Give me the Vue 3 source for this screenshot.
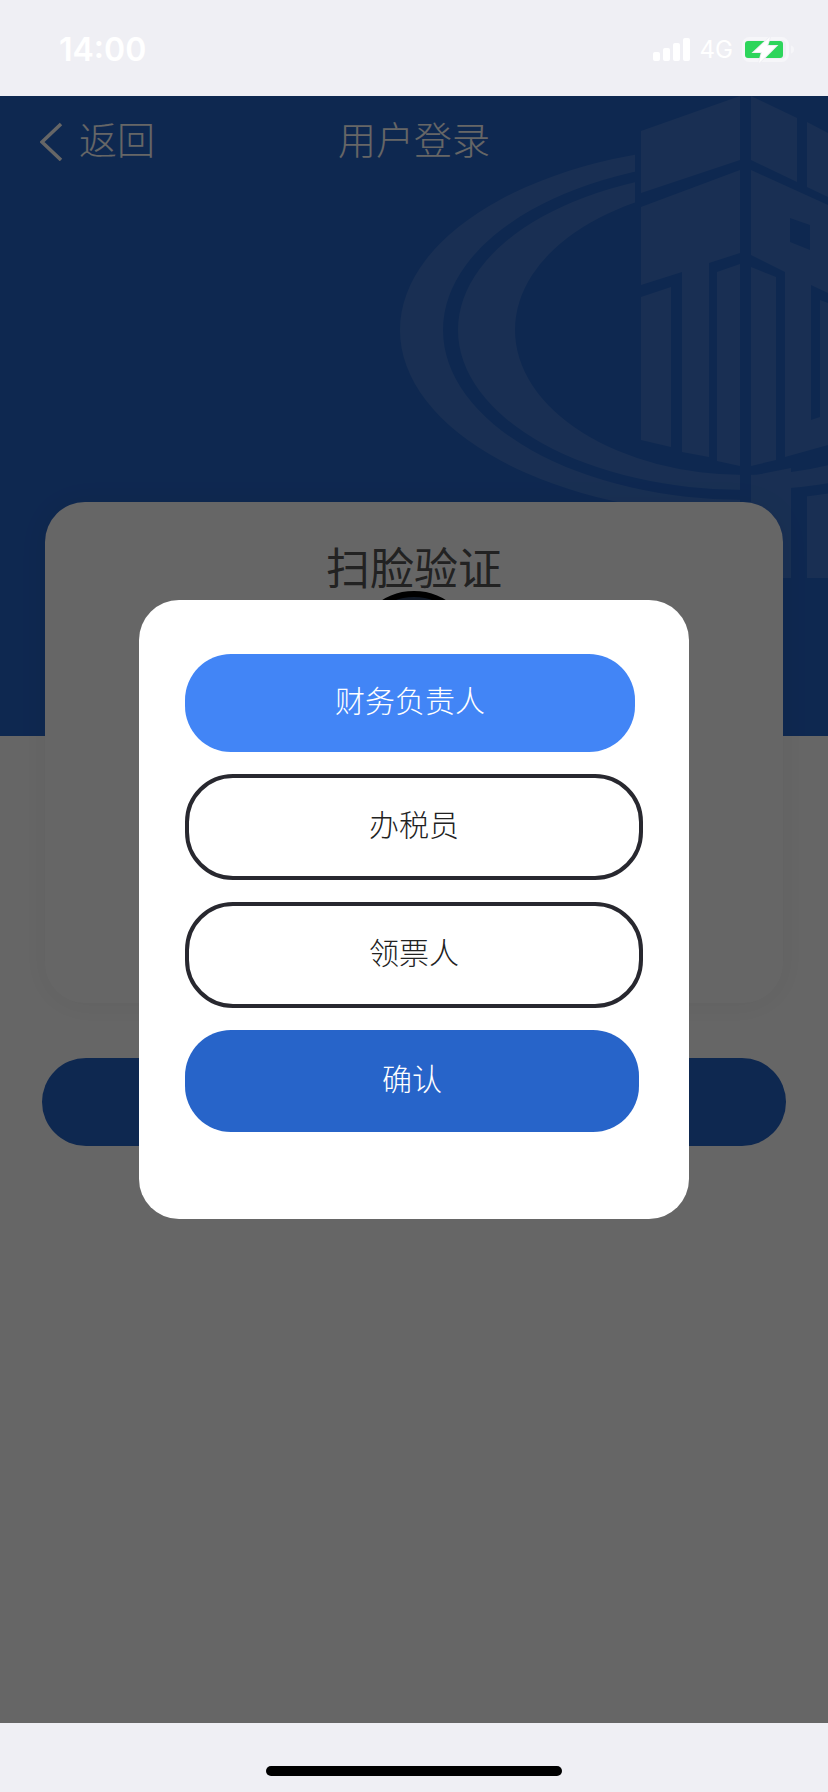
<script setup>
const roles = [
  { label: '财务负责人', kind: 'role-active' },
  { label: '办税员', kind: 'role-outline' },
  { label: '领票人', kind: 'role-outline' }
]
const bars = [9, 13, 18, 23]
</script>

<template>
  <div class="phone">
    <header class="status">
      <span class="time">14:00</span>
      <div class="indicators">
        <div class="signal">
          <i v-for="h in bars" :key="h" :style="{ height: h + 'px' }"></i>
        </div>
        <span class="net">4G</span>
        <svg class="battery" width="56" height="30" viewBox="740 35 56 30">
          <rect x="743.5" y="38.5" width="44" height="22" rx="6" fill="none" stroke="#f6f6f9" stroke-width="3" />
          <rect x="745" y="41" width="38" height="17" rx="3" fill="#2dd55b" />
          <path d="M791 45.5c2 .5 3 2 3 4s-1 3.500-3 4z" fill="#f6f6f9" />
          <path class="bolt" d="M770 37L754 52h8L759 63l17-17h-9z" />
        </svg>
      </div>
    </header>

    <main class="main">
      <section class="hero">
        <svg class="watermark" width="828" height="640" viewBox="0 96 828 640">
          <defs>
            <clipPath id="ring-clip">
              <path d="M0 96H635V440H828V736H0z" />
            </clipPath>
          </defs>
          <g fill="#3f77cf">
            <g clip-path="url(#ring-clip)" fill-rule="evenodd">
              <path d="M400 330a345 185 0 1 0 690 0a345 185 0 1 0-690 0zM443 330a302 170 0 1 0 604 0a302 170 0 1 0-604 0z" />
              <path d="M458 330a287 160 0 1 0 574 0a287 160 0 1 0-574 0zM515 330a230 145 0 1 0 460 0a230 145 0 1 0-460 0z" />
            </g>
            <polygon points="751,476 791,468 791,578 751,578" />
            <polygon points="807,498 828,495 828,578 807,578" />
            <polygon points="641,131 740,96 740,160 641,193" />
            <polygon points="751,96 797,118 797,182 751,160" />
            <polygon points="807,122 828,133 828,197 807,187" />
            <polygon points="641,207 740,170 740,253 709,263 709,457 682,452 682,272 641,285" />
            <polygon points="641,297 671,287 671,447 641,440" />
            <polygon points="717,272 740,264 740,466 717,461" />
            <polygon points="751,267 776,277 776,460 751,466" />
            <path fill-rule="evenodd" d="M751 170L828 205V293L811 285V420L820 417V300L828 303V445L785 457V272L751 255zM790 218V242L810 250V225z" />
          </g>
          <rect x="740" y="470" width="11" height="34" fill="#2564c8" />
          <rect x="791" y="490" width="16" height="88" fill="#2564c8" />
        </svg>
        <nav class="nav">
          <div class="back">
            <svg width="24" height="40" viewBox="0 0 24 40">
              <polyline points="21,3 2,21 21,39" fill="none" stroke="#fff" stroke-width="3.500" />
            </svg>
            <span class="back-label">返回</span>
          </div>
          <h1 class="nav-title">用户登录</h1>
        </nav>
      </section>

      <section class="card">
        <h2 class="card-title">扫脸验证</h2>
        <div class="face"></div>
      </section>
      <div class="next"></div>

      <div class="overlay">
        <div class="modal">
          <button v-for="r in roles" :key="r.label" class="role" :class="r.kind">{{ r.label }}</button>
          <button class="role role-confirm">确认</button>
        </div>
      </div>
    </main>

    <footer class="home">
      <i class="home-bar"></i>
    </footer>
  </div>
</template>

<style scoped>
.phone {
  width: 828px;
  height: 1792px;
  display: flex;
  flex-direction: column;
  overflow: hidden;
  font-family: "Noto Sans CJK SC", "Noto Sans", sans-serif;
  background: #efeff4;
}
.status {
  height: 96px;
  flex: none;
  display: flex;
  justify-content: space-between;
  align-items: flex-start;
  padding: 0 32px 0 59px;
  color: #fff;
}
.time {
  font-family: Inter, sans-serif;
  font-size: 32px;
  font-weight: 600;
  line-height: 40px;
  margin-top: 30px;
}
.indicators {
  display: flex;
  align-items: flex-start;
  padding-top: 35px;
}
.signal {
  display: flex;
  align-items: flex-end;
  gap: 3px;
  height: 26px;
  width: 37px;
}
.signal i {
  width: 7px;
  border-radius: 2px;
  background: #fff;
}
.net {
  font-family: Inter, sans-serif;
  font-size: 24px;
  line-height: 28px;
  margin: 1px 7px 0 10px;
}
.battery {
  display: block;
}
.bolt {
  fill: #fff;
  stroke: #efeff4;
  stroke-width: 2;
  paint-order: stroke;
}
.main {
  flex: 1;
  position: relative;
  background: #fff;
  display: flex;
  flex-direction: column;
}
.hero {
  height: 640px;
  flex: none;
  position: relative;
  overflow: hidden;
  background: #2564c8;
}
.watermark {
  position: absolute;
  left: 0;
  top: 0;
  display: block;
}
.nav {
  position: relative;
  height: 90px;
  display: grid;
  grid-template-columns: 1fr auto 1fr;
  align-items: center;
  color: #fff;
}
.back {
  display: flex;
  align-items: center;
  gap: 15px;
  padding-left: 40px;
  font-size: 38px;
  font-weight: 300;
}
.back-label {
  margin-bottom: 7px;
}
.nav-title {
  grid-column: 2;
  margin: 0 0 7px;
  font-size: 38px;
  font-weight: 300;
}
.card {
  position: relative;
  height: 501px;
  margin: -234px 45px 0;
  padding-top: 35px;
  box-sizing: border-box;
  border-radius: 40px;
  background: #fff;
  box-shadow: 0 2px 30px rgba(0, 0, 0, 0.06);
  text-align: center;
}
.card-title {
  margin: 0;
  font-size: 44px;
  font-weight: 400;
  line-height: 58px;
  color: #555;
}
.face {
  width: 120px;
  height: 120px;
  margin: -4px auto 0;
  box-sizing: border-box;
  border: 6px solid #000;
  border-radius: 50%;
  background: #2b3f5f;
}
.next {
  height: 88px;
  margin: 55px 42px 0;
  border-radius: 44px;
  background: #2564c8;
}
.overlay {
  position: absolute;
  inset: 0;
  display: flex;
  align-items: center;
  justify-content: center;
  background: rgba(0, 0, 0, 0.6);
}
.modal {
  width: 550px;
  height: 619px;
  box-sizing: border-box;
  padding: 54px 46px 0;
  border-radius: 40px;
  background: #fff;
  display: flex;
  flex-direction: column;
  align-items: flex-start;
  gap: 22px;
}
.role {
  display: block;
  padding: 0 0 8px;
  box-sizing: border-box;
  font-family: inherit;
  font-size: 30px;
  font-weight: 300;
  border: none;
  text-align: center;
}
.role-active {
  width: 450px;
  height: 98px;
  border-radius: 46px;
  background: #4285f6;
  color: #fff;
}
.role-outline {
  width: 458px;
  height: 106px;
  border: 4px solid #28282f;
  border-radius: 48px;
  background: #fff;
  color: #222;
}
.role-confirm {
  width: 454px;
  height: 102px;
  border-radius: 46px;
  background: #2764c9;
  color: #fff;
}
.home {
  height: 69px;
  flex: none;
  display: flex;
  justify-content: center;
  padding-top: 43px;
  box-sizing: border-box;
  background: #efeff4;
}
.home-bar {
  width: 296px;
  height: 10px;
  border-radius: 5px;
  background: #000;
}
</style>
